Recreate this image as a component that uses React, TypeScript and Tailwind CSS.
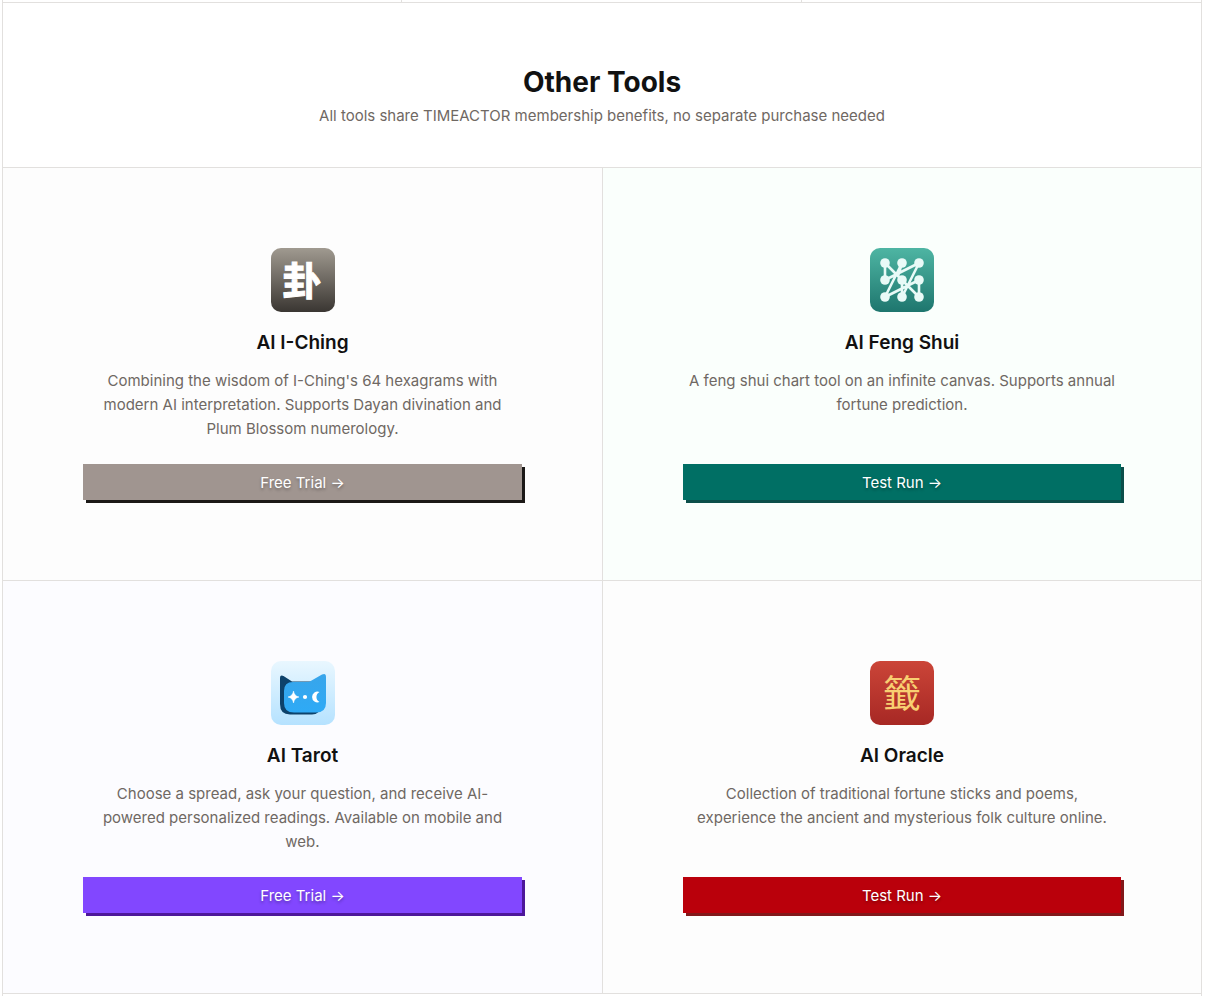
import type { ReactNode } from "react";
import clsx from "clsx";

function IChingLogo() {
  return (
    <svg viewBox="0 0 64 64" className="size-16" aria-hidden="true">
      <defs>
        <linearGradient id="iching-bg" x1="0" y1="0" x2="0" y2="1">
          <stop offset="0" stopColor="#a09a90" />
          <stop offset="1" stopColor="#3a3632" />
        </linearGradient>
      </defs>
      <rect width="64" height="64" rx="10" fill="url(#iching-bg)" />
      <text
        x="31"
        y="47"
        textAnchor="middle"
        fontSize="39"
        fontWeight="700"
        fill="#fff"
        stroke="#fff"
        strokeWidth=".9"
        fontFamily="'Noto Sans CJK SC', sans-serif"
      >
        卦
      </text>
    </svg>
  );
}

function FengShuiLogo() {
  const stops = [15, 32, 49];
  return (
    <svg viewBox="0 0 64 64" className="size-16" aria-hidden="true">
      <defs>
        <linearGradient id="feng-bg" x1="0" y1="0" x2="0" y2="1">
          <stop offset="0" stopColor="#4eb5a3" />
          <stop offset="1" stopColor="#1e766e" />
        </linearGradient>
      </defs>
      <rect width="64" height="64" rx="10" fill="url(#feng-bg)" />
      <path
        d="M15 15V32L49 15L32 49M15 15L32 32L32 49M32 15L15 49L49 32V49L32 32M32 15L28 28"
        fill="none"
        stroke="#e9faf7"
        strokeWidth="2.6"
        strokeLinejoin="round"
      />
      {stops.map((y) =>
        stops.map((x) => <circle key={`${x}-${y}`} cx={x} cy={y} r="4.8" fill="#e9faf7" />),
      )}
    </svg>
  );
}

function TarotLogo() {
  return (
    <svg viewBox="0 0 64 64" className="size-16" aria-hidden="true">
      <defs>
        <linearGradient id="tarot-bg" x1="0" y1="0" x2="0" y2="1">
          <stop offset="0" stopColor="#e9f7ff" />
          <stop offset="1" stopColor="#b5e2ff" />
        </linearGradient>
        <linearGradient id="tarot-face" x1="0" y1="0" x2="0" y2="1">
          <stop offset="0" stopColor="#38a5ea" />
          <stop offset="1" stopColor="#2eaaf6" />
        </linearGradient>
      </defs>
      <rect width="64" height="64" rx="10" fill="url(#tarot-bg)" />
      <path
        d="M9 17Q9 13.500 12.500 15L21 20.500H43L50 45Q49 53.500 41 53.500H19Q9 53.500 9 43Z"
        fill="#0d426b"
      />
      <path
        d="M22 21H38L51 13.500Q55 11.500 55 16V42Q55 51.500 45 51.500H23Q13 51.500 13 42V30Q13 21 22 21Z"
        fill="url(#tarot-face)"
      />
      <path
        d="M22.500 30Q23.300 35.200 28 36Q23.300 36.800 22.500 42Q21.700 36.800 17 36Q21.700 35.200 22.500 30Z"
        fill="#fff"
        stroke="#fff"
        strokeWidth=".5"
      />
      <circle cx="34" cy="36" r="2.100" fill="#fff" />
      <path d="M48.500 31A5.400 5.400 0 1 0 48.500 41A5.600 5.600 0 0 1 48.500 31Z" fill="#fff" />
    </svg>
  );
}

function OracleLogo() {
  return (
    <svg viewBox="0 0 64 64" className="size-16" aria-hidden="true">
      <defs>
        <linearGradient id="oracle-bg" x1="0" y1="0" x2="0" y2="1">
          <stop offset="0" stopColor="#cb4538" />
          <stop offset="1" stopColor="#a72824" />
        </linearGradient>
      </defs>
      <rect width="64" height="64" rx="10" fill="url(#oracle-bg)" />
      <text
        x="32"
        y="46"
        textAnchor="middle"
        fontSize="38"
        fontWeight="400"
        fill="#f8cf72"
        fontFamily="'Noto Sans CJK TC', sans-serif"
      >
        籤
      </text>
    </svg>
  );
}

type Tool = {
  name: string;
  description: string;
  action: string;
  logo: ReactNode;
  cell: string;
  button: string;
};

const tools: Tool[] = [
  {
    name: "AI I-Ching",
    description:
      "Combining the wisdom of I-Ching's 64 hexagrams with modern AI interpretation. Supports Dayan divination and Plum Blossom numerology.",
    action: "Free Trial",
    logo: <IChingLogo />,
    cell: "bg-[#fdfdfd]",
    button: "bg-[#a09590] shadow-[3px_3px_0_#1c1917]",
  },
  {
    name: "AI Feng Shui",
    description:
      "A feng shui chart tool on an infinite canvas. Supports annual fortune prediction.",
    action: "Test Run",
    logo: <FengShuiLogo />,
    cell: "bg-[#fafffc] border-l",
    button: "bg-[#006f64] shadow-[3px_3px_0_#0b4f4a]",
  },
  {
    name: "AI Tarot",
    description:
      "Choose a spread, ask your question, and receive AI-powered personalized readings. Available on mobile and web.",
    action: "Free Trial",
    logo: <TarotLogo />,
    cell: "bg-[#fcfcff] border-t",
    button: "bg-[#8247ff] shadow-[3px_3px_0_#4d179a]",
  },
  {
    name: "AI Oracle",
    description:
      "Collection of traditional fortune sticks and poems, experience the ancient and mysterious folk culture online.",
    action: "Test Run",
    logo: <OracleLogo />,
    cell: "bg-[#fdfdfd] border-t border-l",
    button: "bg-[#ba000b] shadow-[3px_3px_0_#82181a]",
  },
];

function ToolCard({ tool }: { tool: Tool }) {
  return (
    <article
      className={clsx("flex flex-col items-center border-[#e2e0de] p-20 text-center", tool.cell)}
    >
      {tool.logo}
      <h3 className="mt-[17px] text-[19px] leading-7 font-semibold text-[#111]">{tool.name}</h3>
      <p className="mt-3 mb-[23px] max-w-[428px] grow text-[15px] leading-6 text-[#6f6863]">
        {tool.description}
      </p>
      <a
        href="#"
        className={clsx(
          "block w-full pt-[7px] pb-[5px] text-[15px] leading-6 text-white [text-shadow:0_2px_3px_rgb(0_0_0/0.3)]",
          tool.button,
        )}
      >
        {tool.action} →
      </a>
    </article>
  );
}

export default function App() {
  return (
    <div className="bg-white pr-[3px] pl-0.5 font-['Inter',sans-serif]">
      <main className="mx-auto max-w-[1200px] border-x border-[#e2e0de]">
        <div className="grid h-0.5 grid-cols-3 divide-x divide-[#e2e0de]" aria-hidden="true">
          <div />
          <div />
          <div />
        </div>
        <section className="border-y border-[#e2e0de]">
          <header className="border-b border-[#e2e0de] px-4 pt-[61px] pb-[39px] text-center">
            <h2 className="text-[28px] leading-9 font-bold text-[#111]">Other Tools</h2>
            <p className="mt-1 text-[15px] leading-6 text-[#6f6863]">
              All tools share TIMEACTOR membership benefits, no separate purchase needed
            </p>
          </header>
          <div className="grid grid-cols-1 md:grid-cols-2">
            {tools.map((tool) => (
              <ToolCard key={tool.name} tool={tool} />
            ))}
          </div>
        </section>
        <div className="h-0.5" />
      </main>
    </div>
  );
}
